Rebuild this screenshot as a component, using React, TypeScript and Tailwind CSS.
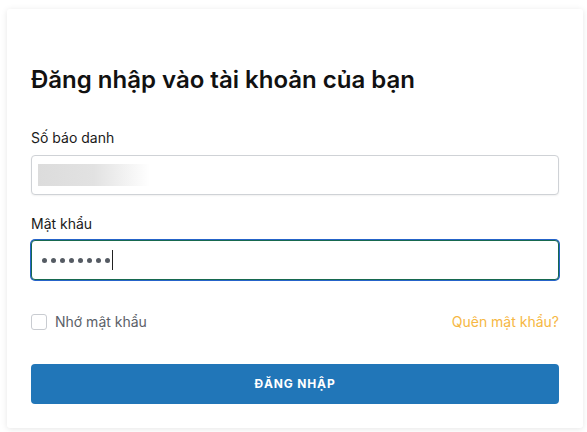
import { useState } from 'react';

function LoginCard() {
  const [remember, setRemember] = useState(false);

  return (
    <div className="ml-[7px] mt-[9px] w-[576px] rounded-[3px] bg-white px-6 pb-6 pt-[55px] shadow-[0_1px_6px_rgba(0,0,0,0.10)]">
      <h1 className="text-[24px] font-semibold leading-8 text-[#111111]">
        Đăng nhập vào tài khoản của bạn
      </h1>

      <div className="mt-8">
        <label className="block text-sm leading-5 text-[#1a1a1a]">Số báo danh</label>
        <div className="mt-[7px] flex h-10 items-center rounded-[4px] border border-[#cfd2d6] bg-white px-[6px] shadow-[0_1px_2px_rgba(0,0,0,0.06)]">
          {/* autofill value is blurred in the picture */}
          <div className="h-[22px] w-[112px] bg-gradient-to-r from-[#dcdcdc] via-[#e2e2e2] to-white" />
        </div>
      </div>

      <div className="mt-[19px]">
        <label className="block text-sm leading-5 text-[#1a1a1a]">Mật khẩu</label>
        <div className="mt-[6px] flex h-10 items-center rounded-[4px] border border-[#17694f] bg-white pl-[9.5px] ring-1 ring-[#2563c9]">
          <div className="flex gap-1">
            {Array.from({ length: 8 }).map((_, i) => (
              <span key={i} className="h-[5px] w-[5px] rounded-full bg-[#555b63]" />
            ))}
          </div>
          <span className="ml-[2.5px] h-[20px] w-px bg-[#222]" />
        </div>
      </div>

      <div className="mt-8 flex h-5 items-center justify-between">
        <label className="flex cursor-pointer items-center gap-2">
          <input
            type="checkbox"
            checked={remember}
            onChange={(e) => setRemember(e.target.checked)}
            className="h-4 w-4 appearance-none rounded-[3px] border border-[#c9ccd1] bg-white"
          />
          <span className="text-sm text-[#5b6068]">Nhớ mật khẩu</span>
        </label>
        <a href="#" className="text-sm text-[#f6b743]">
          Quên mật khẩu?
        </a>
      </div>

      <button className="mt-8 flex h-10 w-full items-center justify-center rounded-[4px] bg-[#2176b8] text-xs font-bold tracking-[0.07em] text-white">
        ĐĂNG NHẬP
      </button>
    </div>
  );
}

export default function App() {
  return (
    <div className="min-h-[432px] bg-white font-['Inter','Liberation_Sans',sans-serif]">
      <LoginCard />
    </div>
  );
}
